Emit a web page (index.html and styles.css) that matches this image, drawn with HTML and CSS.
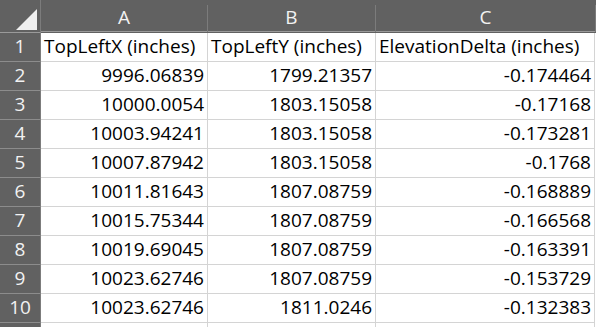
FILE: index.html
```html
<!DOCTYPE html>
<html>
<head>
<meta charset="utf-8">
<link rel="stylesheet" href="styles.css">
</head>
<body>
<div class="sheet">
  <div class="corner"><div class="tri"></div></div>
  <div class="colhead">A</div>
  <div class="colhead">B</div>
  <div class="colhead">C</div>

  <div class="rowhead">1</div>
  <div class="cell txt">TopLeftX (inches)</div>
  <div class="cell txt">TopLeftY (inches)</div>
  <div class="cell txt">ElevationDelta (inches)</div>

  <div class="rowhead">2</div>
  <div class="cell">9996.06839</div>
  <div class="cell">1799.21357</div>
  <div class="cell">-0.174464</div>

  <div class="rowhead">3</div>
  <div class="cell">10000.0054</div>
  <div class="cell">1803.15058</div>
  <div class="cell">-0.17168</div>

  <div class="rowhead">4</div>
  <div class="cell">10003.94241</div>
  <div class="cell">1803.15058</div>
  <div class="cell">-0.173281</div>

  <div class="rowhead">5</div>
  <div class="cell">10007.87942</div>
  <div class="cell">1803.15058</div>
  <div class="cell">-0.1768</div>

  <div class="rowhead">6</div>
  <div class="cell">10011.81643</div>
  <div class="cell">1807.08759</div>
  <div class="cell">-0.168889</div>

  <div class="rowhead">7</div>
  <div class="cell">10015.75344</div>
  <div class="cell">1807.08759</div>
  <div class="cell">-0.166568</div>

  <div class="rowhead">8</div>
  <div class="cell">10019.69045</div>
  <div class="cell">1807.08759</div>
  <div class="cell">-0.163391</div>

  <div class="rowhead">9</div>
  <div class="cell">10023.62746</div>
  <div class="cell">1807.08759</div>
  <div class="cell">-0.153729</div>

  <div class="rowhead">10</div>
  <div class="cell">10023.62746</div>
  <div class="cell">1811.0246</div>
  <div class="cell">-0.132383</div>

  <div class="rowhead"></div>
  <div class="cell"></div>
  <div class="cell"></div>
  <div class="cell"></div>
</div>
</body>
</html>
```

FILE: styles.css
```css
html, body {
  margin: 0;
  padding: 0;
  background: #ffffff;
  overflow: hidden;
}
.sheet {
  display: grid;
  grid-template-columns: 41px 167px 168px 219px 1px;
  grid-template-rows: 33px repeat(10, 29px) 4px;
  font-family: "Open Sans", "Liberation Sans", Arial, sans-serif;
  font-size: 19px;
  width: 596px;
  background: #ffffff;
}
.sheet > div {
  box-sizing: border-box;
  display: flex;
  align-items: flex-end;
  white-space: nowrap;
  overflow: hidden;
  line-height: 1;
}
.corner {
  background: #616161;
  border-right: 1px solid #7c7c7c;
  border-bottom: 1px solid #9a9a9a;
  position: relative;
  grid-column: 1;
}
.tri {
  position: absolute;
  left: 16px;
  top: 9px;
  width: 21px;
  height: 21px;
  background: #f0f0f0;
  clip-path: polygon(100% 0, 100% 100%, 0 100%);
}
.colhead {
  background: #616161;
  color: #f2f2f2;
  justify-content: center;
  padding-bottom: 5px;
  border-bottom: 1px solid #9a9a9a;
  border-right: 1px solid #7c7c7c;
  border-image: linear-gradient(to bottom, #616161 0, #616161 5px, #7c7c7c 5px) 0 1 0 0;
  box-shadow: inset 0 -1px 0 #9a9a9a;
}
.sheet > .colhead:nth-child(4) {
  grid-column: 4 / span 2;
}
.rowhead {
  background: #616161;
  color: #f2f2f2;
  justify-content: center;
  padding-bottom: 5px;
  border-bottom: 1px solid #8c8c8c;
  border-right: 1px solid #7c7c7c;
  grid-column: 1;
}
.cell {
  color: #000000;
  justify-content: flex-end;
  padding: 0 3px 5px 0;
  border-bottom: 1px solid #d4d4d4;
  border-right: 1px solid #d4d4d4;
}
.cell.txt {
  justify-content: flex-start;
  padding-left: 3px;
}
.sheet > .cell:nth-child(4n+1) {
  grid-column: 4 / span 2;
  border-right: none;
  box-shadow: inset -2px 0 0 #ffffff, inset -3px 0 0 #d4d4d4;
}
```
